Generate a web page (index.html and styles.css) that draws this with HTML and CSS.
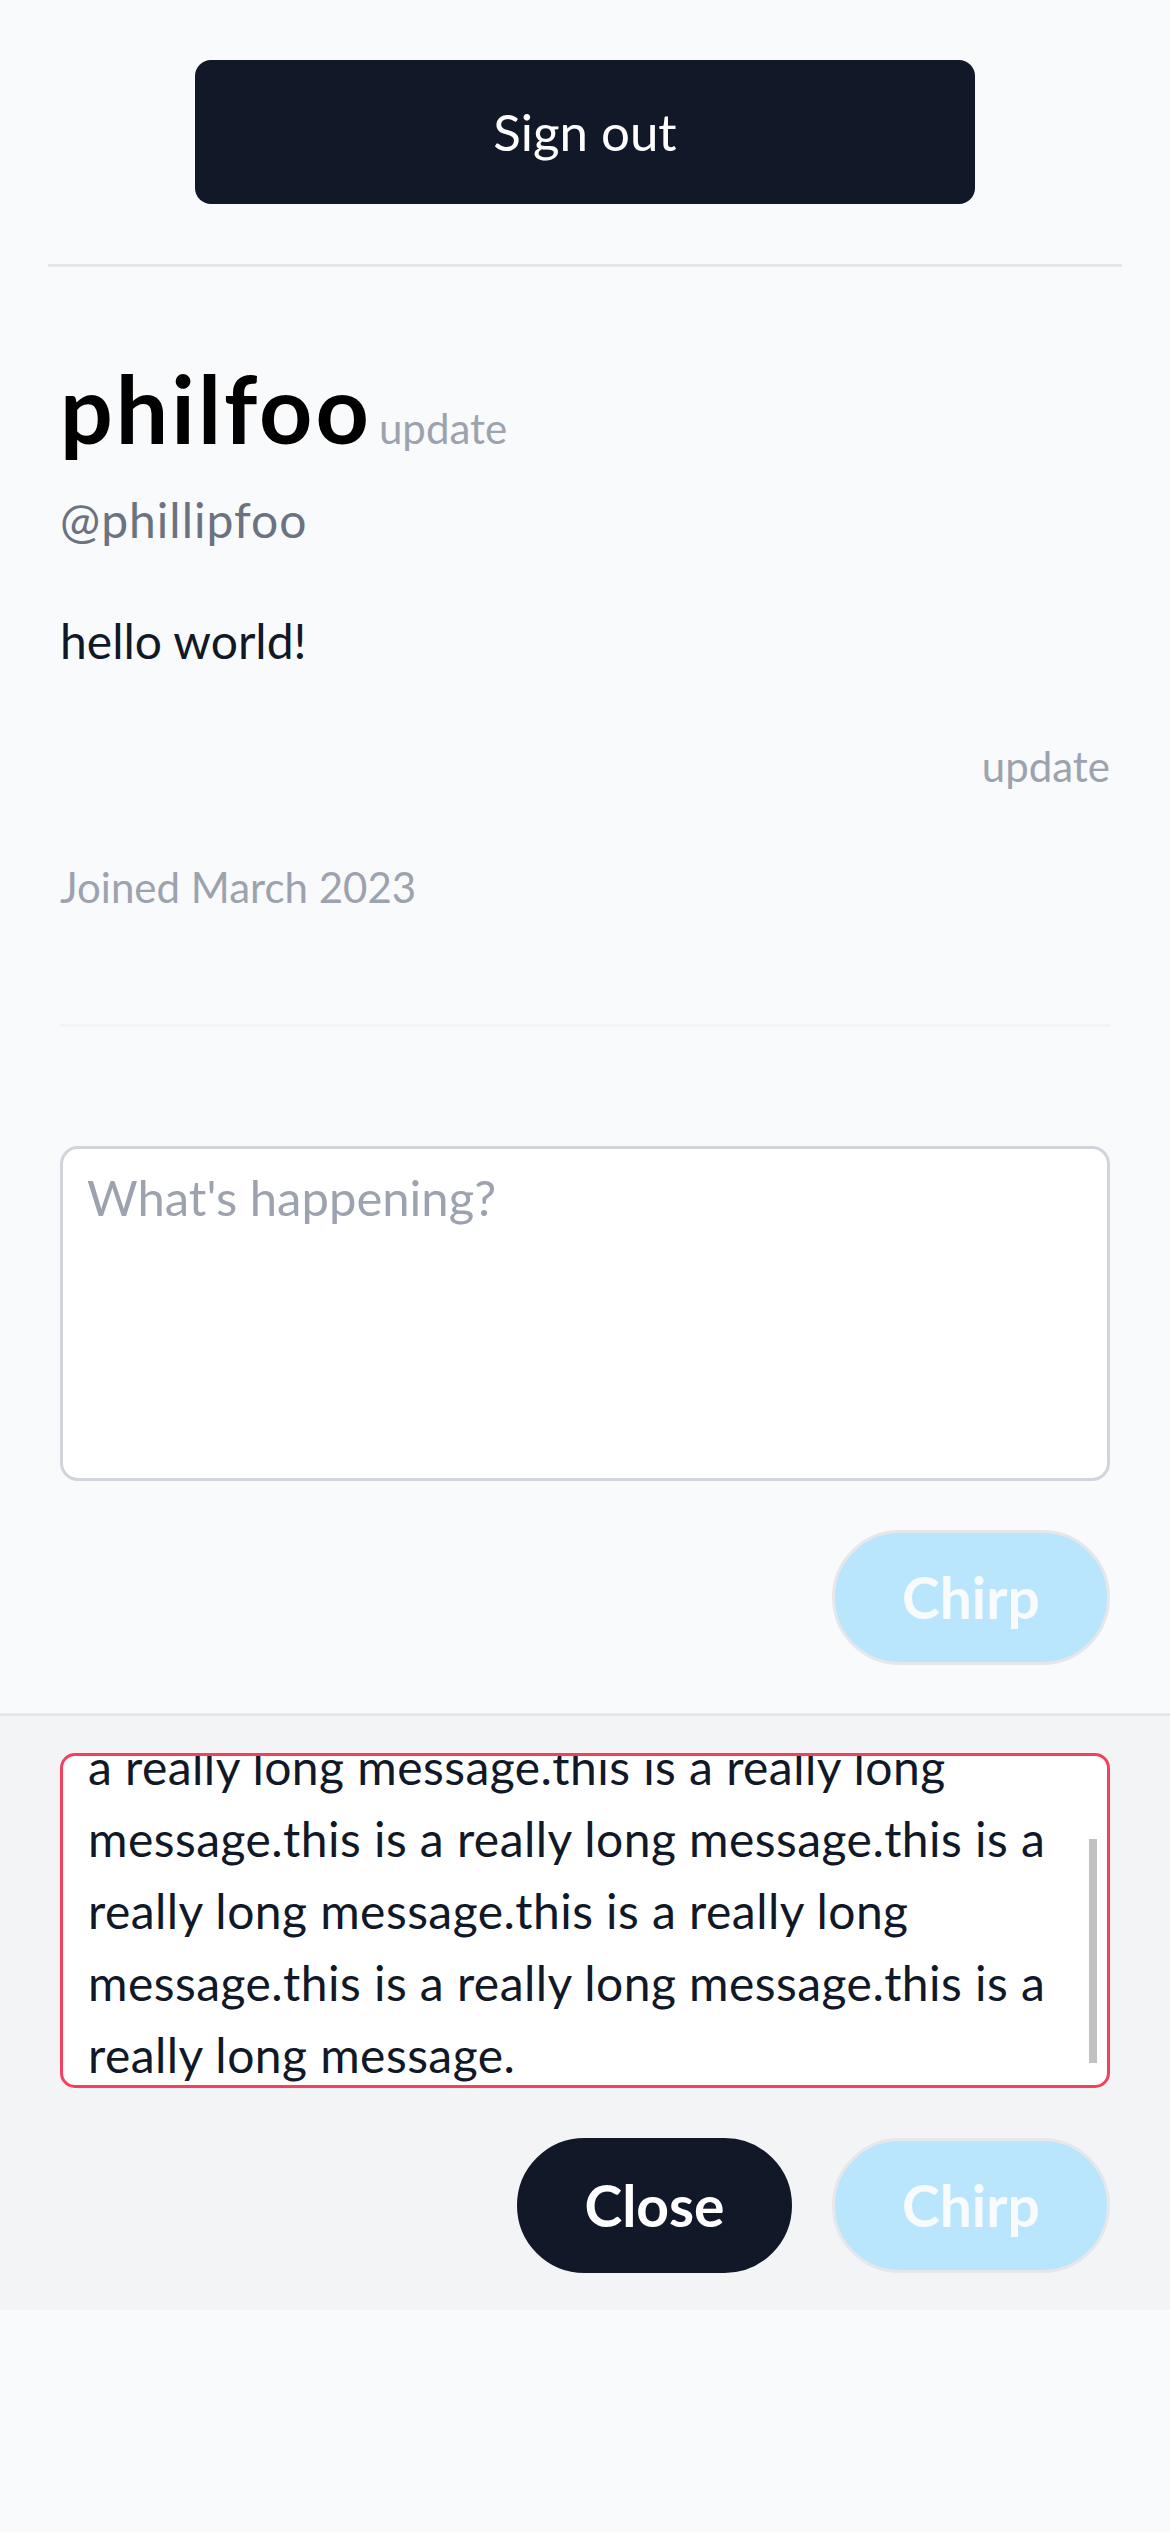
FILE: index.html
```html
<!DOCTYPE html>
<html lang="en">
<head>
<meta charset="utf-8">
<title>philfoo</title>
<link rel="stylesheet" href="styles.css">
</head>
<body>
<header class="top">
  <button class="signout">Sign out</button>
  <div class="rule"></div>
</header>

<section class="profile">
  <div class="name-row">
    <h1 class="name">philfoo</h1>
    <span class="link-update">update</span>
  </div>
  <p class="handle">@phillipfoo</p>
  <p class="bio">hello world!</p>
  <div class="bio-update"><span class="link-update">update</span></div>
  <p class="joined">Joined March 2023</p>
  <div class="rule-light"></div>
</section>

<section class="composer">
  <textarea class="compose-box" placeholder="What's happening?"></textarea>
  <div class="actions">
    <button class="btn btn-chirp">Chirp</button>
  </div>
</section>

<section class="editor">
  <div class="edit-box">
    <div class="edit-text">
      <div class="ln">really long message.this is a really long</div>
      <div class="ln">a really long message.this is a really long</div>
      <div class="ln">message.this is a really long message.this is a</div>
      <div class="ln">really long message.this is a really long</div>
      <div class="ln">message.this is a really long message.this is a</div>
      <div class="ln">really long message.</div>
    </div>
    <div class="scroll-thumb"></div>
  </div>
  <div class="actions actions-edit">
    <button class="btn btn-close">Close</button>
    <button class="btn btn-chirp">Chirp</button>
  </div>
</section>
</body>
</html>
```

FILE: styles.css
```css
* { box-sizing: border-box; }

html, body {
  margin: 0;
  padding: 0;
  background: #f9fafb;
  font-family: Lato, "Open Sans", "Liberation Sans", sans-serif;
  color: #111827;
}

.top {
  padding-top: 60px;
}

.signout {
  display: block;
  margin: 0 auto;
  width: 780px;
  height: 144px;
  background: #111827;
  color: #ffffff;
  border: none;
  border-radius: 16px;
  font-family: inherit;
  font-size: 51px;
  font-weight: 400;
  line-height: 1.2;
  padding: 0;
}

.rule {
  margin: 60px 48px 0;
  height: 3px;
  background: #e5e7eb;
}

.profile {
  padding: 95px 60px 0;
}

.name-row {
  display: flex;
  align-items: baseline;
  height: 92px;
}

.name {
  margin: 0;
  font-size: 93px;
  line-height: 92px;
  font-weight: 700;
  letter-spacing: 3px;
  color: #000000;
}

.name-row .link-update {
  margin-left: 7px;
}

.link-update {
  font-size: 42px;
  line-height: 63px;
  color: #9ca3af;
}

.handle {
  margin: 30px 0 0;
  font-size: 48px;
  line-height: 72px;
  letter-spacing: 1px;
  color: #6b7280;
}

.bio {
  margin: 49px 0 0;
  font-size: 48px;
  line-height: 72px;
  color: #111827;
}

.bio-update {
  margin-top: 58px;
  display: flex;
  justify-content: flex-end;
  height: 63px;
}

.joined {
  margin: 58px 0 0;
  font-size: 42px;
  line-height: 63px;
  color: #9ca3af;
}

.rule-light {
  margin-top: 105px;
  height: 3px;
  background: #f3f4f6;
}

.composer {
  padding: 119px 60px 48px;
}

.compose-box {
  display: block;
  width: 100%;
  height: 335px;
  margin: 0;
  padding: 18px 24px;
  border: 3px solid #d1d5db;
  border-radius: 18px;
  background: #ffffff;
  font-family: inherit;
  font-size: 49px;
  line-height: 60px;
  color: #111827;
  resize: none;
  outline: none;
}

.compose-box::placeholder {
  color: #9ca3af;
  opacity: 1;
}

.actions {
  display: flex;
  justify-content: flex-end;
  gap: 40px;
  margin-top: 49px;
}

.btn {
  height: 135px;
  border-radius: 9999px;
  font-family: inherit;
  font-size: 57px;
  font-weight: 700;
  line-height: 1.2;
  padding: 0;
}

.btn-chirp {
  width: 278px;
  background: #bae6fd;
  border: 3px solid #e5e7eb;
  color: #f8fafc;
}

.btn-close {
  width: 275px;
  background: #111827;
  border: 3px solid #111827;
  color: #ffffff;
}

.editor {
  border-top: 3px solid #e5e7eb;
  background: #f3f4f6;
  padding: 37px 60px 37px;
}

.edit-box {
  position: relative;
  height: 335px;
  border: 3px solid #f43f5e;
  border-radius: 15px;
  background: #ffffff;
  overflow: hidden;
  padding: 0 25px;
}

.edit-text {
  margin-top: -97px;
  font-size: 48px;
  line-height: 72px;
  letter-spacing: 0.45px;
  color: #111827;
}

.ln {
  white-space: nowrap;
}

.scroll-thumb {
  position: absolute;
  right: 10px;
  top: 83px;
  width: 8px;
  height: 224px;
  background: #c1c1c1;
}

.actions-edit {
  margin-top: 50px;
}
```
